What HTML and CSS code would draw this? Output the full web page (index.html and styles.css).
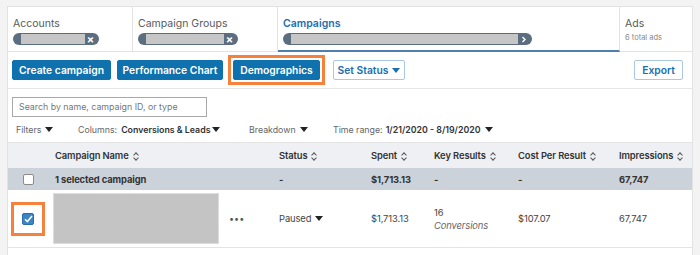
FILE: index.html
```html
<!DOCTYPE html>
<html>
<head>
<meta charset="utf-8">
<link rel="stylesheet" href="styles.css">
</head>
<body>
<div class="card">
  <div class="tabs">
    <div class="tab t1">
      <div class="tab-label">Accounts</div>
      <div class="pill"><span class="pill-fill"></span><span class="pill-end">×</span></div>
    </div>
    <div class="tab t2">
      <div class="tab-label">Campaign Groups</div>
      <div class="pill"><span class="pill-fill"></span><span class="pill-end">×</span></div>
    </div>
    <div class="tab t3 active">
      <div class="tab-label">Campaigns</div>
      <div class="pill"><span class="pill-fill"></span><span class="pill-end chev">
        <svg width="6" height="7" viewBox="0 0 6 7"><path d="M1.5 1 L4 3.5 L1.5 6" fill="none" stroke="#fff" stroke-width="1.4"/></svg></span></div>
    </div>
    <div class="tab t4">
      <div class="tab-label">Ads</div>
      <div class="tab-sub">6 total ads</div>
    </div>
  </div>

  <div class="toolbar">
    <button class="btn primary b-create">Create campaign</button>
    <button class="btn primary b-perf">Performance Chart</button>
    <span class="highlight"><button class="btn primary">Demographics</button></span>
    <button class="btn secondary b-status">Set Status <span class="caret"></span></button>
    <span class="spacer"></span>
    <button class="btn secondary export">Export</button>
  </div>

  <div class="filters">
    <div class="search">Search by name, campaign ID, or type</div>
    <div class="filter-row">
      <span class="f f-filters">Filters <span class="caret dark"></span></span>
      <span class="f f-columns">Columns: <b>Conversions &amp; Leads</b><span class="caret dark tight"></span></span>
      <span class="f f-break">Breakdown <span class="caret dark"></span></span>
      <span class="f f-time">Time range: <b>1/21/2020 - 8/19/2020</b> <span class="caret dark"></span></span>
    </div>
  </div>

  <div class="table">
    <div class="row head">
      <div class="c cb"></div>
      <div class="c name">Campaign Name <i class="sort"></i></div>
      <div class="c">Status <i class="sort"></i></div>
      <div class="c">Spent <i class="sort"></i></div>
      <div class="c">Key Results <i class="sort"></i></div>
      <div class="c">Cost Per Result <i class="sort"></i></div>
      <div class="c">Impressions <i class="sort"></i></div>
    </div>
    <div class="row summary">
      <div class="c cb"><span class="box"></span></div>
      <div class="c name">1 selected campaign</div>
      <div class="c">-</div>
      <div class="c">$1,713.13</div>
      <div class="c">-</div>
      <div class="c">-</div>
      <div class="c">67,747</div>
    </div>
    <div class="row data">
      <div class="c cb"><span class="cb-highlight"><span class="box checked">
        <svg width="9" height="8" viewBox="0 0 9 8"><path d="M1 4.2 L3.4 6.6 L8 1" fill="none" stroke="#fff" stroke-width="1.5"/></svg></span></span></div>
      <div class="c name"><span class="redacted"></span><span class="more">•••</span></div>
      <div class="c">Paused <span class="caret dark"></span></div>
      <div class="c">$1,713.13</div>
      <div class="c kr"><span>16</span><em>Conversions</em></div>
      <div class="c">$107.07</div>
      <div class="c">67,747</div>
    </div>
  </div>
</div>
</body>
</html>
```

FILE: styles.css
```css
* { box-sizing: border-box; }
html, body { margin: 0; padding: 0; }
body {
  background: #f3f3f3;
  font-family: "Inter", "Helvetica", sans-serif;
  color: #333;
  width: 700px;
  height: 255px;
  overflow: hidden;
}
.card {
  margin: 6px 0 0 7px;
  width: 686px;
  height: 260px;
  background: #fff;
  border: 1px solid #e2e2e2;
  border-bottom: none;
}
.tabs {
  display: flex;
  height: 45px;
}
.tab {
  padding: 9px 0 0 5px;
  border-right: 1px solid #e2e2e2;
  border-bottom: 1px solid #e2e2e2;
}
.t1 { width: 125px; }
.t2 { width: 145px; }
.t3 { width: 342px; border-bottom: 2px solid #4f7fad; }
.t4 { flex: 1; border-right: none; }
.tab-label {
  font-size: 10.5px;
  color: #5a5a5a;
  line-height: 15px;
  height: 17px;
}
.active .tab-label { color: #1c6eb0; font-weight: 600; }
.tab-sub { font-size: 7.5px; color: #888; margin-top: 0; }
.pill {
  display: flex;
  align-items: center;
  height: 12px;
  background: #5b6d7e;
  border-radius: 6px;
  padding: 0 3px 0 8px;
}
.t1 .pill { width: 86px; }
.t2 .pill { width: 100px; }
.t3 .pill { width: 249px; }
.pill-fill {
  flex: 1;
  height: 10px;
  background: #c6c6c6;
}
.pill-end {
  width: 11px;
  color: #fff;
  font-size: 11px;
  font-weight: 700;
  line-height: 12px;
  text-align: center;
}
.pill-end.chev { display: flex; align-items: center; justify-content: center; }

.toolbar {
  display: flex;
  align-items: center;
  height: 37px;
  padding: 0 9px 0 4px;
  border-bottom: 1px solid #e6e6e6;
}
.btn {
  font-family: inherit;
  font-size: 10.3px;
  font-weight: 600;
  height: 20px;
  padding: 0;
  border-radius: 2px;
  border: 1px solid transparent;
  cursor: pointer;
  display: inline-flex;
  align-items: center;
  justify-content: center;
  margin-right: 6px;
}
.b-create { width: 99px; }
.b-perf { width: 106px; margin-right: 5px; }
.b-status { width: 72px; }
.primary { background: #0f71ad; color: #fff; border-color: #0f71ad; }
.secondary { background: #fff; color: #1a6fb0; border-color: #a9c8e2; }
.highlight {
  border: 3px solid #f5813c;
  padding: 2px;
  display: inline-flex;
  margin: 0 8px 0 0;
}
.highlight .btn { margin: 0; width: 87px; }
.spacer { flex: 1; }
.export { margin-right: 0; width: 49px; }
.caret {
  display: inline-block;
  width: 0; height: 0;
  border-left: 4px solid transparent;
  border-right: 4px solid transparent;
  border-top: 5px solid #1a6fb0;
  margin-left: 4px;
}
.caret.dark { border-top-color: #222; }
.caret.tight { margin-left: 1px; }

.filters { padding: 8px 5px 0 4px; height: 53px; }
.search {
  width: 195px;
  height: 20px;
  border: 1px solid #a8a8a8;
  font-size: 8.8px;
  color: #777;
  padding: 3px 6px;
  line-height: 12px;
}
.filter-row {
  display: flex;
  align-items: center;
  font-size: 8.8px;
  color: #666;
  margin-top: 5px;
  height: 14px;
}
.filter-row b { color: #333; font-weight: 600; }
.f { display: inline-flex; align-items: center; }
.f-filters { width: 62px; margin-left: 4px; }
.f-columns { width: 171px; }
.f-columns b { margin-left: 4px; }
.f-break { width: 84px; }
.f-time b { margin-left: 3px; }

.table { border-top: 1px solid #e3e3e3; }
.row {
  display: grid;
  grid-template-columns: 45px 226px 92px 63px 84px 101px 1fr;
  align-items: center;
  font-size: 9.4px;
  letter-spacing: -0.1px;
}
.row.head { height: 25px; background: #eef0f3; font-weight: 600; color: #333; }
.row.summary { height: 22px; background: #ccd2d9; font-weight: 700; color: #333; }
.row.data { height: 58px; background: #fff; border-bottom: 1px solid #e3e3e3; color: #444; }
.c { display: flex; align-items: center; }
.c.name { padding-left: 2px; }
.sort {
  display: inline-block;
  width: 7px; height: 10px;
  margin-left: 4px;
  position: relative;
}
.sort::before, .sort::after {
  content: "";
  position: absolute;
  left: 1px;
  width: 3px; height: 3px;
  border-left: 1px solid #555;
  border-top: 1px solid #555;
}
.sort::before { top: 2px; transform: rotate(45deg); }
.sort::after { top: 5px; transform: rotate(225deg); }
.box {
  display: inline-block;
  width: 11px; height: 11px;
  border: 1px solid #8a8a8a;
  border-radius: 2px;
  background: #fff;
  margin-left: 15px;
}
.cb-highlight {
  display: inline-flex;
  align-items: center;
  justify-content: center;
  width: 34px; height: 34px;
  border: 3px solid #f5813c;
  margin-left: 3px;
}
.box.checked {
  margin: 0;
  width: 12px; height: 12px;
  background: #3b84c5;
  border: 1px solid #2b6ea8;
  display: inline-flex;
  align-items: center;
  justify-content: center;
}
.redacted {
  width: 166px;
  height: 51px;
  background: #c4c4c4;
  border: 1px solid #ddd;
  margin-left: -2px;
}
.more { margin-left: 10px; font-size: 9px; letter-spacing: 0; color: #555; }
.kr { flex-direction: column; align-items: flex-start; line-height: 13px; }
.kr em { color: #666; }
```
